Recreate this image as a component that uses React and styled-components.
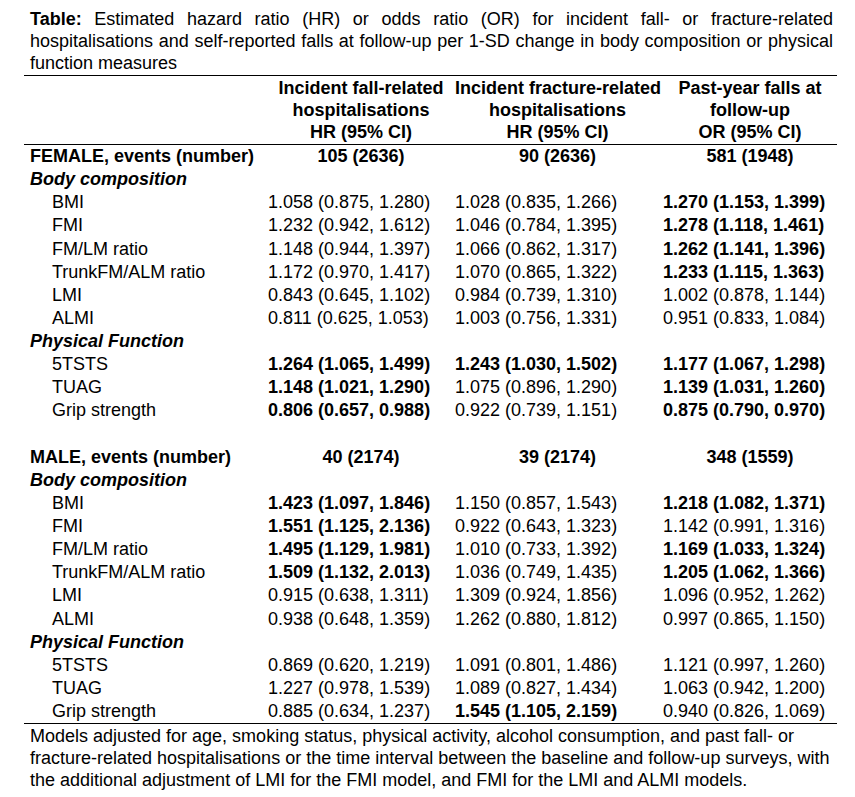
import styled, { createGlobalStyle } from 'styled-components'

const GlobalStyle = createGlobalStyle`
	body {
		margin: 0;
		background: #fff;
		color: #000;
		font-family: "Liberation Sans", Arial, sans-serif;
	}
`

const COLS = '238px 190px 208px 177px'

const female = {
	events: ['105 (2636)', '90 (2636)', '581 (1948)'],
	body: [
		['BMI', '1.058 (0.875, 1.280)', '1.028 (0.835, 1.266)', '*1.270 (1.153, 1.399)'],
		['FMI', '1.232 (0.942, 1.612)', '1.046 (0.784, 1.395)', '*1.278 (1.118, 1.461)'],
		['FM/LM ratio', '1.148 (0.944, 1.397)', '1.066 (0.862, 1.317)', '*1.262 (1.141, 1.396)'],
		['TrunkFM/ALM ratio', '1.172 (0.970, 1.417)', '1.070 (0.865, 1.322)', '*1.233 (1.115, 1.363)'],
		['LMI', '0.843 (0.645, 1.102)', '0.984 (0.739, 1.310)', '1.002 (0.878, 1.144)'],
		['ALMI', '0.811 (0.625, 1.053)', '1.003 (0.756, 1.331)', '0.951 (0.833, 1.084)'],
	],
	physical: [
		['5TSTS', '*1.264 (1.065, 1.499)', '*1.243 (1.030, 1.502)', '*1.177 (1.067, 1.298)'],
		['TUAG', '*1.148 (1.021, 1.290)', '1.075 (0.896, 1.290)', '*1.139 (1.031, 1.260)'],
		['Grip strength', '*0.806 (0.657, 0.988)', '0.922 (0.739, 1.151)', '*0.875 (0.790, 0.970)'],
	],
}

const male = {
	events: ['40 (2174)', '39 (2174)', '348 (1559)'],
	body: [
		['BMI', '*1.423 (1.097, 1.846)', '1.150 (0.857, 1.543)', '*1.218 (1.082, 1.371)'],
		['FMI', '*1.551 (1.125, 2.136)', '0.922 (0.643, 1.323)', '1.142 (0.991, 1.316)'],
		['FM/LM ratio', '*1.495 (1.129, 1.981)', '1.010 (0.733, 1.392)', '*1.169 (1.033, 1.324)'],
		['TrunkFM/ALM ratio', '*1.509 (1.132, 2.013)', '1.036 (0.749, 1.435)', '*1.205 (1.062, 1.366)'],
		['LMI', '0.915 (0.638, 1.311)', '1.309 (0.924, 1.856)', '1.096 (0.952, 1.262)'],
		['ALMI', '0.938 (0.648, 1.359)', '1.262 (0.880, 1.812)', '0.997 (0.865, 1.150)'],
	],
	physical: [
		['5TSTS', '0.869 (0.620, 1.219)', '1.091 (0.801, 1.486)', '1.121 (0.997, 1.260)'],
		['TUAG', '1.227 (0.978, 1.539)', '1.089 (0.827, 1.434)', '1.063 (0.942, 1.200)'],
		['Grip strength', '0.885 (0.634, 1.237)', '*1.545 (1.105, 2.159)', '0.940 (0.826, 1.069)'],
	],
}

// header centre shift and data left inset for each value column
const headPad = [8, 3, 3]
const dataPad = [6, 3, 3]

const Section = ({ sex, group }) => (
	<>
		<Row>
			<Label bold>{sex}, events (number)</Label>
			{group.events.map((e, i) => (
				<Centered key={i} pad={headPad[i]} bold>{e}</Centered>
			))}
		</Row>
		<Row>
			<Label bold italic>Body composition</Label>
		</Row>
		{group.body.map(r => <DataRow key={r[0]} row={r} />)}
		<Row>
			<Label bold italic>Physical Function</Label>
		</Row>
		{group.physical.map(r => <DataRow key={r[0]} row={r} />)}
	</>
)

const DataRow = ({ row }) => (
	<Row>
		<Label indent>{row[0]}</Label>
		{row.slice(1).map((v, i) => (
			<Value key={i} pad={dataPad[i]} bold={v.startsWith('*')}>
				{v.replace('*', '')}
			</Value>
		))}
	</Row>
)

const App = () => {
	return (
		<Page>
			<GlobalStyle />
			<Caption>
				<b>Table:</b> Estimated hazard ratio (HR) or odds ratio (OR) for incident fall- or fracture-related
				hospitalisations and self-reported falls at follow-up per 1-SD change in body composition or physical
				function measures
			</Caption>
			<Head>
				<span />
				<HeadCell pad={headPad[0]}>Incident fall-related<br />hospitalisations<br />HR (95% CI)</HeadCell>
				<HeadCell pad={headPad[1]}>Incident fracture-related<br />hospitalisations<br />HR (95% CI)</HeadCell>
				<HeadCell pad={headPad[2]}>Past-year falls at<br />follow-up<br />OR (95% CI)</HeadCell>
			</Head>
			<Body>
				<Section sex="FEMALE" group={female} />
				<Row />
				<Section sex="MALE" group={male} />
			</Body>
			<Note>
				Models adjusted for age, smoking status, physical activity, alcohol consumption, and past fall- or
				fracture-related hospitalisations or the time interval between the baseline and follow-up surveys, with
				the additional adjustment of LMI for the FMI model, and FMI for the LMI and ALMI models.
			</Note>
		</Page>
	)
}

const Page = styled.div`
	width: 813px;
	margin-left: 24px;
	padding-top: 8px;
	font-size: 18px;
`

const Caption = styled.p`
	margin: 0;
	padding: 0 4px 1px 6px;
	line-height: 22px;
	text-align: justify;
	border-bottom: 1px solid #000;
`

const Head = styled.div`
	display: grid;
	grid-template-columns: ${COLS};
	padding: 1px 0;
	line-height: 22px;
	font-weight: 700;
	border-bottom: 1px solid #000;
`

const HeadCell = styled.div`
	text-align: center;
	white-space: nowrap;
	padding-left: ${p => p.pad}px;
`

const Body = styled.div`
	border-bottom: 1px solid #000;
`

const Row = styled.div`
	display: grid;
	grid-template-columns: ${COLS};
	height: 23.125px;
	line-height: 23.125px;
	white-space: nowrap;
`

const Label = styled.div`
	padding-left: ${p => (p.indent ? 28 : 6)}px;
	font-weight: ${p => (p.bold ? 700 : 400)};
	font-style: ${p => (p.italic ? 'italic' : 'normal')};
`

const Centered = styled.div`
	text-align: center;
	padding-left: ${p => p.pad}px;
	font-weight: ${p => (p.bold ? 700 : 400)};
`

const Value = styled.div`
	padding-left: ${p => p.pad}px;
	font-weight: ${p => (p.bold ? 700 : 400)};
`

const Note = styled.p`
	margin: 0;
	padding: 1px 4px 0 6px;
	line-height: 22px;
`

export default App
